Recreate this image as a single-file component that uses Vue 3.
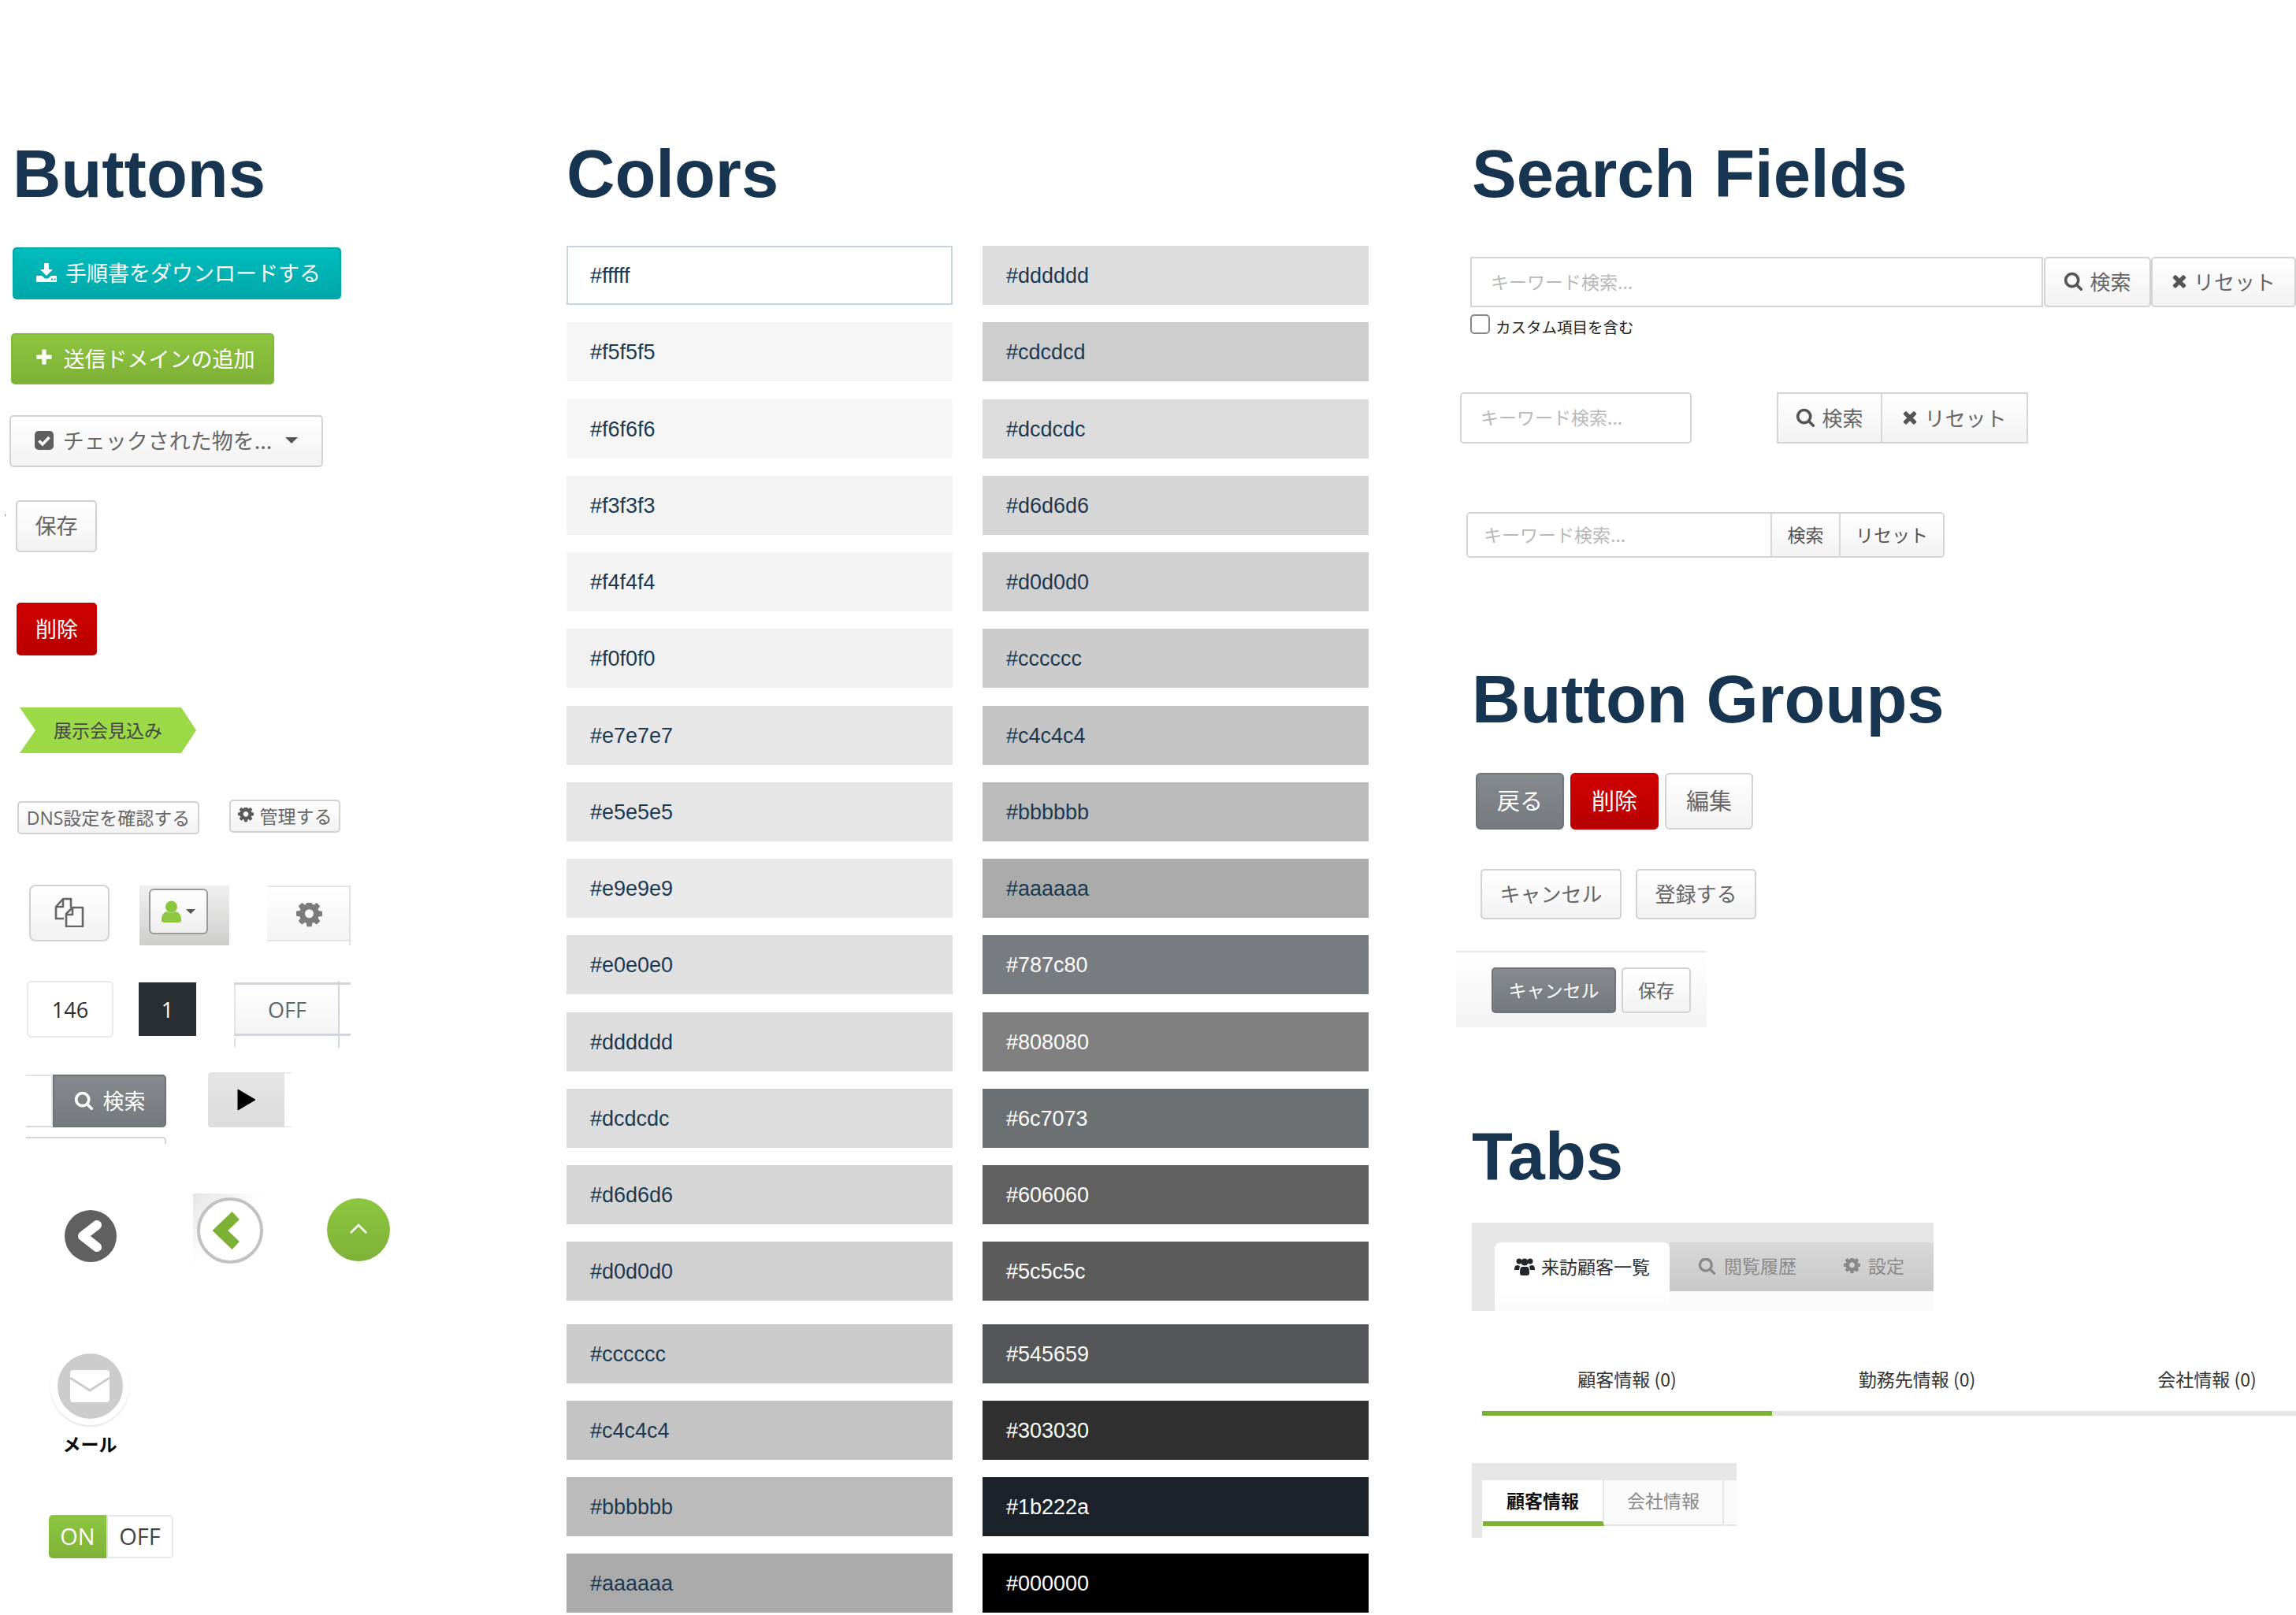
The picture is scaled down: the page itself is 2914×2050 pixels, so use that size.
<script setup>
const leftColors = ['#fffff', '#f5f5f5', '#f6f6f6', '#f3f3f3', '#f4f4f4', '#f0f0f0', '#e7e7e7', '#e5e5e5', '#e9e9e9', '#e0e0e0', '#dddddd', '#dcdcdc', '#d6d6d6', '#d0d0d0', '#cccccc', '#c4c4c4', '#bbbbbb', '#aaaaaa']
const rightColors = ['#dddddd', '#cdcdcd', '#dcdcdc', '#d6d6d6', '#d0d0d0', '#cccccc', '#c4c4c4', '#bbbbbb', '#aaaaaa', '#787c80', '#808080', '#6c7073', '#606060', '#5c5c5c', '#545659', '#303030', '#1b222a', '#000000']
const lightText = ['#787c80', '#808080', '#6c7073', '#606060', '#5c5c5c', '#545659', '#303030', '#1b222a', '#000000']

const gearPath = 'M1024 640q0-106-75-181t-181-75-181 75-75 181 75 181 181 75 181-75 75-181zm512-109v222q0 12-8 23t-20 13l-185 28q-19 54-39 91 35 50 107 138 10 12 10 25t-9 23q-27 37-99 108t-94 71q-12 0-26-9l-138-108q-44 23-91 38-16 136-29 186-7 28-36 28h-222q-14 0-24.5-8.5t-11.5-21.5l-28-184q-49-16-90-37l-141 107q-10 9-25 9-14 0-25-11-126-114-165-168-7-10-7-23 0-12 8-23 15-21 51-66.5t54-70.5q-27-50-41-99l-183-27q-13-2-21-12.5t-8-23.5v-222q0-12 8-23t19-13l186-28q14-46 39-92-40-57-107-138-10-12-10-24 0-10 9-23 26-36 98.5-107.5t94.5-71.5q13 0 26 10l138 107q44-23 91-38 16-136 29-186 7-28 36-28h222q14 0 24.5 8.5t11.5 21.5l28 184q49 16 90 37l142-107q9-9 24-9 13 0 25 10 129 119 165 170 7 8 7 22 0 12-8 23-15 21-51 66.5t-54 70.5q26 50 41 98l183 28q13 2 21 12.5t8 23.5z'
const searchPath = 'M1216 832q0-185-131.5-316.5t-316.5-131.5-316.5 131.5-131.5 316.5 131.5 316.5 316.5 131.5 316.5-131.5 131.5-316.5zm512 832q0 52-38 90t-90 38q-54 0-90-38l-343-342q-179 124-399 124-143 0-273.5-55.5t-225-150-150-225-55.5-273.5 55.5-273.5 150-225 225-150 273.5-55.5 273.5 55.5 225 150 150 225 55.5 273.5q0 220-124 399l343 343q37 37 37 90z'
const timesPath = 'M1298 1322q0 40-28 68l-136 136q-28 28-68 28t-68-28l-294-294-294 294q-28 28-68 28t-68-28l-136-136q-28-28-28-68t28-68l294-294-294-294q-28-28-28-68t28-68l136-136q28-28 68-28t68 28l294 294 294-294q28-28 68-28t68 28l136 136q28 28 28 68t-28 68l-294 294 294 294q28 28 28 68z'
const plusPath = 'M1600 736v192q0 40-28 68t-68 28h-416v416q0 40-28 68t-68 28h-192q-40 0-68-28t-28-68v-416h-416q-40 0-68-28t-28-68v-192q0-40 28-68t68-28h416v-416q0-40 28-68t68-28h192q40 0 68 28t28 68v416h416q40 0 68 28t28 68z'
</script>

<template>
  <div class="page">
    <!-- buttons -->
    <section class="col col-buttons">
      <h1 class="heading">Buttons</h1>

      <button class="btn btn-teal dl-btn">
        <svg class="ic-dl" viewBox="0 0 26 24"><path fill="#fff" d="M10 0h6v8h5l-8 8-8-8h5z" /><path fill="#fff" fill-rule="evenodd" d="M0 16h7l4 3.5h4l4-3.5h7v7a1 1 0 0 1-1 1H1a1 1 0 0 1-1-1zM19 19.5h2v2h-2zM22.500 19.500h2v2h-2z" /></svg>
        手順書をダウンロードする
      </button>

      <button class="btn btn-green add-btn">
        <svg class="ic-plus" viewBox="100 100 1592 1592"><path fill="#fff" :d="plusPath" /></svg>
        送信ドメインの追加
      </button>

      <button class="btn btn-plain check-btn">
        <svg class="ic-check" viewBox="0 0 24 24"><rect width="24" height="24" rx="5" fill="#5f5f5f" /><path d="M5.500 12.500l4.500 4.500 8.500-9" fill="none" stroke="#fff" stroke-width="3.600" /></svg>
        <span class="check-label">チェックされた物を...</span>
        <span class="caret"></span>
      </button>

      <div class="save-row">
        <span class="speck"></span>
        <button class="btn btn-plain small-btn">保存</button>
      </div>

      <button class="btn btn-red del-btn">削除</button>

      <div class="arrow-tag">展示会見込み</div>

      <div class="mini-row">
        <button class="btn btn-plain mini dns">DNS設定を確認する</button>
        <button class="btn btn-plain mini manage">
          <svg class="ic-gear-sm" viewBox="0 0 1536 1536"><path fill="#5a5a5a" :d="gearPath" /></svg>
          管理する
        </button>
      </div>

      <div class="icon-row">
        <button class="btn btn-plain copy-btn">
          <svg class="ic-copy" viewBox="0 0 38 38" fill="none" stroke="#666" stroke-width="2.600" stroke-linejoin="round">
            <path d="M12 27H2V12L11 2h10v11" />
            <path d="M11 2v10H2" />
            <path d="M15 37V21l8-8h13v24z" fill="#fafafa" />
            <path d="M23 13v9h-8" />
          </svg>
        </button>
        <div class="user-tile">
          <div class="user-inner">
            <svg class="ic-user" viewBox="0 0 25 28"><circle cx="12.500" cy="8" r="7.500" fill="#8cc63f" /><path fill="#8cc63f" d="M0 25c0-7 3-10 7-11 3 2 8 2 11 0 4 1 7 4 7 11q0 3-3 3H3q-3 0-3-3z" /></svg>
            <span class="caret caret-sm"></span>
          </div>
        </div>
        <div class="gear-tile">
          <div class="gear-inner">
            <svg class="ic-gear" viewBox="0 0 1536 1536"><path fill="#7b7b7b" :d="gearPath" /></svg>
          </div>
        </div>
      </div>

      <div class="num-row">
        <div class="num">146</div>
        <div class="num-dark">1</div>
        <div class="off-clip">
          <div class="off-main">OFF</div>
          <div class="off-stub"></div>
        </div>
      </div>

      <div class="tool-row">
        <div class="search-clip">
          <div class="search-top">
            <div class="search-blank"></div>
            <button class="btn btn-grey search-grey">
              <svg class="ic-search" viewBox="0 0 1792 1792"><path fill="#fff" :d="searchPath" /></svg>
              検索
            </button>
          </div>
          <div class="search-next"></div>
        </div>
        <div class="play-clip">
          <div class="play-box">
            <svg class="ic-play" viewBox="0 0 24 28"><path d="M1 1l22 13L1 27z" fill="#000" stroke="#000" stroke-linejoin="round" /></svg>
          </div>
          <div class="play-rest"></div>
        </div>
      </div>

      <div class="round-row">
        <div class="round-dark">
          <svg viewBox="0 0 66 66" class="fill"><path d="M41 19L23 33l18 14" fill="none" stroke="#fff" stroke-width="12" stroke-linecap="round" stroke-linejoin="round" /></svg>
        </div>
        <div class="round-tile">
          <div class="round-ring">
            <svg viewBox="0 0 84 84" class="fill"><path d="M50 21L28 42l22 21" fill="none" stroke="#7cb135" stroke-width="15" /></svg>
          </div>
        </div>
        <div class="round-green">
          <svg viewBox="0 0 80 80" class="fill"><path d="M30 44l10-10 10 10" fill="none" stroke="#fff" stroke-width="2.500" /></svg>
        </div>
      </div>

      <div class="mail">
        <div class="mail-ring">
          <div class="mail-disc">
            <svg class="ic-mail" viewBox="0 0 50 41"><rect width="50" height="41" rx="4" fill="#fff" /><path d="M0 10l25 16 25-16" fill="none" stroke="#ccc" stroke-width="3" /></svg>
          </div>
        </div>
        <div class="mail-label">メール</div>
      </div>

      <div class="switch">
        <span class="switch-on">ON</span>
        <span class="switch-off">OFF</span>
      </div>
    </section>

    <!-- colors -->
    <section class="col col-colors">
      <h1 class="heading">Colors</h1>
      <div class="swatches">
        <div class="swatch-col">
          <div
            v-for="(c, i) in leftColors"
            :key="'l' + i"
            class="swatch"
            :class="{ 'swatch-first': i === 0, 'swatch-gap': i === 14 }"
            :style="{ background: i === 0 ? '#fff' : c }"
          >{{ c }}</div>
        </div>
        <div class="swatch-col">
          <div
            v-for="(c, i) in rightColors"
            :key="'r' + i"
            class="swatch"
            :class="{ 'swatch-light': lightText.includes(c), 'swatch-gap': i === 14 }"
            :style="{ background: c }"
          >{{ c }}</div>
        </div>
      </div>
    </section>

    <!-- search, groups, tabs -->
    <section class="col col-right">
      <h1 class="heading">Search Fields</h1>

      <div class="search-one">
        <input class="field field-one" placeholder="キーワード検索..." />
        <button class="btn btn-plain s1-search">
          <svg class="ic-s" viewBox="0 0 1792 1792"><path fill="#555" :d="searchPath" /></svg>
          検索
        </button>
        <button class="btn btn-plain s1-reset">
          <svg class="ic-x" viewBox="0 0 1408 1792"><path fill="#555" :d="timesPath" /></svg>
          リセット
        </button>
      </div>
      <label class="custom">
        <span class="fake-check"></span>
        カスタム項目を含む
      </label>

      <div class="search-two">
        <input class="field field-two" placeholder="キーワード検索..." />
        <div class="s2-group">
          <button class="s2-btn s2-search">
            <svg class="ic-s" viewBox="0 0 1792 1792"><path fill="#555" :d="searchPath" /></svg>
            検索
          </button>
          <button class="s2-btn s2-reset">
            <svg class="ic-x" viewBox="0 0 1408 1792"><path fill="#555" :d="timesPath" /></svg>
            リセット
          </button>
        </div>
      </div>

      <div class="search-three">
        <input class="field field-three" placeholder="キーワード検索..." />
        <button class="s3-btn s3-search">検索</button>
        <button class="s3-btn s3-reset">リセット</button>
      </div>

      <h1 class="heading heading-groups">Button Groups</h1>

      <div class="group-one">
        <button class="btn btn-grey g1">戻る</button>
        <button class="btn btn-red g1">削除</button>
        <button class="btn btn-plain g1">編集</button>
      </div>

      <div class="group-two">
        <button class="btn btn-plain g2-cancel">キャンセル</button>
        <button class="btn btn-plain g2-save">登録する</button>
      </div>

      <div class="group-panel">
        <button class="btn btn-grey g3-cancel">キャンセル</button>
        <button class="btn btn-plain g3-save">保存</button>
      </div>

      <h1 class="heading heading-tabs">Tabs</h1>

      <div class="tabs-one">
        <div class="t1-active">
          <svg class="ic-users" viewBox="0 0 26 24"><g fill="#23272b"><circle cx="6" cy="6" r="3.500" /><circle cx="20" cy="6" r="3.500" /><circle cx="13" cy="7" r="4.500" /><path d="M0 17c0-4 1-6 4-6l3 1-1 5H1zM26 17c0-4-1-6-4-6l-3 1 1 5h5z" /><path d="M7 21c0-6 1-8 3-8h6c2 0 3 2 3 8q0 3-3 3h-6q-3 0-3-3z" /></g></svg>
          来訪顧客一覧
        </div>
        <div class="t1-rest">
          <span class="t1-tab t1-history">
            <svg class="ic-t" viewBox="0 0 1792 1792"><path fill="#888" :d="searchPath" /></svg>
            閲覧履歴
          </span>
          <span class="t1-tab t1-settings">
            <svg class="ic-t2" viewBox="0 0 1536 1536"><path fill="#888" :d="gearPath" /></svg>
            設定
          </span>
        </div>
      </div>

      <div class="tabs-two">
        <div class="t2-tab t2-active">顧客情報 (0)</div>
        <div class="t2-tab">勤務先情報 (0)</div>
        <div class="t2-tab">会社情報 (0)</div>
      </div>

      <div class="tabs-three">
        <div class="t3-bar">
          <div class="t3-tab t3-active">顧客情報</div>
          <div class="t3-tab t3-idle">会社情報</div>
        </div>
      </div>
    </section>
  </div>
</template>

<style scoped>
.page {
  display: flex;
  width: 2914px;
  height: 2050px;
  overflow: hidden;
  background: #fff;
  font-family: "Liberation Sans", "Noto Sans CJK JP", sans-serif;
}

.col {
  padding-top: 171px;
  box-sizing: border-box;
}

.col-buttons {
  width: 704px;
}

.col-colors {
  width: 1144px;
}

.col-right {
  width: 1066px;
}

.heading {
  margin: 0;
  height: 100px;
  font-size: 85px;
  line-height: 100px;
  font-weight: 700;
  color: #173450;
  white-space: nowrap;
}

.col-buttons .heading {
  margin-left: 16px;
}

.col-colors .heading {
  margin-left: 15px;
}

.col-right .heading {
  margin-left: 20px;
}

svg {
  display: block;
  flex: none;
}

.btn {
  display: flex;
  align-items: center;
  justify-content: center;
  box-sizing: border-box;
  padding: 0 0 3px;
  border: 2px solid #d2d2d2;
  border-radius: 5px;
  font-family: "Noto Sans CJK JP", sans-serif;
  font-size: 27px;
  white-space: nowrap;
}

.btn-plain {
  color: #666;
  background: linear-gradient(#fff, #f2f2f2);
}

.btn-grey {
  color: #fff;
  border-color: #70747a;
  background: linear-gradient(#868a8e, #76797d);
}

.btn-red {
  color: #fff;
  border-color: #c20000;
  background: linear-gradient(#d00000, #b80000);
}

.btn-teal {
  color: #fff;
  border-color: #00a8a8;
  background: linear-gradient(#00bcbc, #00a8ab);
}

.btn-green {
  color: #fff;
  border-color: #82b83a;
  background: linear-gradient(#8cc43e, #7eb136);
}

.caret {
  display: block;
  width: 0;
  height: 0;
  border-left: 8px solid transparent;
  border-right: 8px solid transparent;
  border-top: 8px solid #555;
}

/* left column */
.dl-btn {
  width: 417px;
  height: 66px;
  margin: 43px 0 0 16px;
  padding-left: 4px;
  gap: 11px;
}

.ic-dl {
  width: 26px;
  height: 24px;
}

.add-btn {
  width: 334px;
  height: 65px;
  margin: 43px 0 0 14px;
  padding-left: 6px;
  gap: 14px;
}

.ic-plus {
  width: 22px;
  height: 22px;
}

.check-btn {
  width: 398px;
  height: 66px;
  margin: 39px 0 0 12px;
  gap: 12px;
}

.ic-check {
  width: 24px;
  height: 24px;
}

.check-label {
  margin-right: 5px;
}

.save-row {
  position: relative;
  margin-top: 42px;
}

.speck {
  position: absolute;
  left: 6px;
  top: 18px;
  width: 1px;
  height: 2px;
  background: #777;
}

.small-btn {
  width: 103px;
  height: 66px;
  margin-left: 20px;
}

.del-btn {
  width: 102px;
  height: 67px;
  margin: 64px 0 0 21px;
}

.arrow-tag {
  display: flex;
  align-items: center;
  width: 224px;
  height: 58px;
  margin: 66px 0 0 25px;
  padding: 0 0 3px 43px;
  box-sizing: border-box;
  background: #9bd947;
  clip-path: polygon(0 0, 205px 0, 100% 50%, 205px 100%, 0 100%, 20px 50%);
  color: #444;
  font-family: "Noto Sans CJK JP", sans-serif;
  font-size: 23px;
}

.mini-row {
  display: flex;
  align-items: flex-start;
  margin: 59px 0 0 22px;
  height: 44px;
}

.mini {
  height: 42px;
  font-size: 23px;
}

.dns {
  width: 231px;
  margin-top: 2px;
  font-family: "Open Sans", "Noto Sans CJK JP", sans-serif;
}

.manage {
  width: 141px;
  margin-left: 38px;
  gap: 8px;
}

.ic-gear-sm {
  width: 20px;
  height: 20px;
}

.icon-row {
  display: flex;
  align-items: flex-start;
  height: 77px;
  margin: 64px 0 0 37px;
}

.copy-btn {
  width: 102px;
  height: 72px;
  border-radius: 8px;
}

.ic-copy {
  width: 38px;
  height: 38px;
}

.user-tile {
  width: 114px;
  height: 76px;
  margin: 1px 0 0 38px;
  padding: 4px 0 0 12px;
  box-sizing: border-box;
  background: linear-gradient(#f0f0f0, #cdcecc);
}

.user-inner {
  display: flex;
  align-items: center;
  justify-content: center;
  gap: 6px;
  width: 75px;
  height: 58px;
  box-sizing: border-box;
  border: 2px solid #999;
  border-radius: 6px;
  background: linear-gradient(#fff, #eee);
}

.ic-user {
  width: 25px;
  height: 28px;
}

.caret-sm {
  border-left-width: 6px;
  border-right-width: 6px;
  border-top-width: 6px;
}

.gear-tile {
  width: 106px;
  height: 76px;
  margin: 1px 0 0 48px;
  box-sizing: border-box;
  border-right: 2px solid #e2e2e2;
}

.gear-inner {
  display: flex;
  align-items: center;
  justify-content: center;
  height: 71px;
  padding: 5px 0 0 2px;
  box-sizing: border-box;
  border-top: 2px solid #e6e6e6;
  border-bottom: 2px solid #e2e4e8;
  background: linear-gradient(#fff, #f3f3f3);
}

.ic-gear {
  width: 33px;
  height: 33px;
}

.num-row {
  display: flex;
  align-items: flex-start;
  height: 85px;
  margin: 45px 0 0 34px;
  font-family: "Open Sans", sans-serif;
  font-size: 27px;
}

.num {
  display: flex;
  align-items: center;
  justify-content: center;
  width: 110px;
  height: 72px;
  box-sizing: border-box;
  border: 2px solid #e6ebf0;
  border-radius: 6px;
  color: #2a2e33;
}

.num-dark {
  display: flex;
  align-items: center;
  justify-content: center;
  width: 73px;
  height: 68px;
  margin: 2px 0 0 32px;
  background: #292e33;
  color: #fff;
}

.off-clip {
  position: relative;
  width: 148px;
  height: 85px;
  margin-left: 48px;
  box-sizing: border-box;
  overflow: hidden;
}

.off-clip::before {
  content: "";
  position: absolute;
  left: 0;
  right: 0;
  top: 2px;
  height: 68px;
  box-sizing: border-box;
  border-top: 3px solid #d2d6dc;
  border-bottom: 3px solid #d2d6dc;
}

.off-clip::after {
  content: "";
  position: absolute;
  left: 132px;
  top: 0;
  bottom: 0;
  width: 2px;
  background: #d2d6dc;
}

.off-main {
  display: flex;
  align-items: center;
  justify-content: center;
  width: 133px;
  height: 65px;
  padding-bottom: 3px;
  margin-top: 5px;
  box-sizing: border-box;
  border-left: 2px solid #e2e4e8;
  border-radius: 0 0 0 5px;
  background: linear-gradient(#fff, #f3f3f3);
  color: #666;
}

.off-stub {
  width: 133px;
  height: 15px;
  box-sizing: border-box;
  border-left: 2px solid #e2e4e8;
  border-radius: 5px 0 0 0;
}

.tool-row {
  display: flex;
  align-items: flex-start;
  height: 91px;
  margin: 31px 0 0 33px;
}

.search-clip {
  width: 178px;
  margin-top: 3px;
}

.search-top {
  display: flex;
  height: 67px;
}

.search-blank {
  width: 34px;
  box-sizing: border-box;
  border-top: 2px solid #e2e4e8;
  border-bottom: 2px solid #d8dce0;
  border-right: 2px solid #e2e4e8;
}

.search-grey {
  width: 144px;
  height: 67px;
  gap: 12px;
  border-radius: 0 5px 5px 0;
}

.ic-search {
  width: 25px;
  height: 25px;
}

.search-next {
  height: 9px;
  margin-top: 12px;
  box-sizing: border-box;
  border-top: 2px solid #d2d6dc;
  border-right: 2px solid #d2d6dc;
  border-radius: 0 5px 0 0;
}

.play-clip {
  display: flex;
  width: 106px;
  height: 70px;
  margin-left: 53px;
}

.play-box {
  display: flex;
  align-items: center;
  justify-content: center;
  width: 97px;
  box-sizing: border-box;
  border-radius: 4px 0 0 4px;
  background: linear-gradient(#e5e5e5, #dcdcdc);
}

.ic-play {
  width: 24px;
  height: 28px;
}

.play-rest {
  flex: 1;
  box-sizing: border-box;
  border-top: 2px solid #eee;
  border-bottom: 2px solid #eee;
}

.round-row {
  display: flex;
  align-items: flex-start;
  height: 95px;
  margin: 63px 0 0 82px;
}

.fill {
  width: 100%;
  height: 100%;
}

.round-dark {
  width: 66px;
  height: 66px;
  margin-top: 21px;
  border-radius: 50%;
  background: #606060;
}

.round-tile {
  width: 90px;
  height: 95px;
  margin-left: 97px;
  padding: 5px 0 0 5px;
  box-sizing: border-box;
  background: linear-gradient(135deg, #e4e4e4, #fff 50%);
}

.round-ring {
  width: 84px;
  height: 84px;
  box-sizing: border-box;
  border: 4px solid #c2c2c2;
  border-radius: 50%;
  background: #fff;
}

.round-green {
  width: 80px;
  height: 80px;
  margin: 6px 0 0 80px;
  border-radius: 50%;
  background: linear-gradient(#8cc63f, #7fb238);
}

.mail {
  width: 100px;
  margin: 99px 0 0 64px;
}

.mail-ring {
  display: flex;
  align-items: center;
  justify-content: center;
  width: 100px;
  height: 100px;
  border-radius: 50%;
  background: #fff;
  box-shadow: 0 2px 2px #e6e6e6;
}

.mail-disc {
  display: flex;
  align-items: center;
  justify-content: center;
  width: 83px;
  height: 83px;
  border-radius: 50%;
  background: #ccc;
}

.ic-mail {
  width: 50px;
  height: 41px;
}

.mail-label {
  margin-top: 5px;
  text-align: center;
  white-space: nowrap;
  color: #000;
  font-family: "Noto Sans CJK JP", sans-serif;
  font-size: 23px;
  font-weight: 700;
  line-height: 36px;
}

.switch {
  display: flex;
  width: 158px;
  height: 55px;
  margin: 73px 0 0 62px;
  font-family: "Open Sans", sans-serif;
  font-size: 29px;
}

.switch-on {
  display: flex;
  align-items: center;
  justify-content: center;
  width: 73px;
  padding-bottom: 2px;
  box-sizing: border-box;
  border-radius: 5px 0 0 5px;
  background: linear-gradient(#8cc63f, #7fb238);
  color: #fff;
}

.switch-off {
  display: flex;
  align-items: center;
  justify-content: center;
  flex: 1;
  padding-bottom: 2px;
  box-sizing: border-box;
  border: 2px solid #e4e9ee;
  border-left-color: #d8e0e4;
  border-radius: 0 5px 5px 0;
  color: #444;
}

/* colors */
.swatches {
  display: flex;
  gap: 38px;
  margin: 41px 0 0 15px;
}

.swatch-col {
  display: flex;
  flex-direction: column;
  gap: 22.25px;
  width: 490px;
}

.swatch {
  display: flex;
  align-items: center;
  flex: none;
  height: 75px;
  padding: 2px 0 0 30px;
  box-sizing: border-box;
  color: #1b3a52;
  font-size: 27px;
}

.swatch-first {
  border: 2px solid #c6d4de;
  padding-left: 28px;
}

.swatch-light {
  color: #fff;
}

.swatch-gap {
  margin-top: 7px;
}

/* search fields */
.field {
  display: block;
  box-sizing: border-box;
  margin: 0;
  padding: 0 0 3px 24px;
  outline: none;
  border: 2px solid #d2d6da;
  background: #fff;
  font-family: "Noto Sans CJK JP", sans-serif;
  font-size: 23px;
}

.field::placeholder {
  color: #b9b9b9;
}

.search-one {
  display: flex;
  margin: 55px 0 0 18px;
  height: 64px;
}

.field-one {
  width: 727px;
  height: 64px;
}

.s1-search {
  width: 136px;
  margin-left: 1px;
  gap: 8px;
  font-size: 26px;
}

.s1-reset {
  width: 184px;
  gap: 8px;
  font-size: 26px;
}

.ic-s {
  width: 25px;
  height: 25px;
}

.ic-x {
  width: 20px;
  height: 25px;
}

.custom {
  display: flex;
  align-items: flex-start;
  gap: 7px;
  height: 25px;
  margin: 9px 0 0 18px;
  color: #222;
  font-family: "Noto Sans CJK JP", sans-serif;
  font-size: 19.500px;
  line-height: 32px;
  white-space: nowrap;
}

.fake-check {
  width: 25px;
  height: 25px;
  box-sizing: border-box;
  border: 2px solid #888;
  border-radius: 5px;
  background: #fff;
}

.search-two {
  display: flex;
  height: 65px;
  margin: 74px 0 0 5px;
}

.field-two {
  width: 294px;
  height: 65px;
  border-radius: 5px;
}

.s2-group {
  display: flex;
  margin-left: 108px;
  box-sizing: border-box;
  border: 2px solid #d2d6da;
}

.s2-btn {
  display: flex;
  align-items: center;
  justify-content: center;
  gap: 8px;
  box-sizing: border-box;
  padding: 0 0 3px;
  border: 0;
  background: linear-gradient(#fff, #f2f2f2);
  color: #666;
  font-family: "Noto Sans CJK JP", sans-serif;
  font-size: 26px;
  white-space: nowrap;
}

.s2-search {
  width: 132px;
  border-right: 2px solid #d8d8d8;
}

.s2-reset {
  width: 183px;
}

.search-three {
  display: flex;
  width: 607px;
  height: 58px;
  margin: 87px 0 0 13px;
  box-sizing: border-box;
  border: 2px solid #d2d6da;
  border-radius: 5px;
  overflow: hidden;
}

.field-three {
  width: 384px;
  height: 54px;
  padding-left: 20px;
  border: 0;
}

.s3-btn {
  box-sizing: border-box;
  padding: 0 0 3px;
  border: 0;
  border-left: 2px solid #d8d8d8;
  background: linear-gradient(#fff, #f2f2f2);
  color: #555;
  font-family: "Noto Sans CJK JP", sans-serif;
  font-size: 23px;
  white-space: nowrap;
}

.s3-search {
  width: 87px;
}

.s3-reset {
  flex: 1;
}

/* button groups */
.heading-groups {
  margin-top: 130px;
}

.group-one {
  display: flex;
  gap: 8px;
  height: 72px;
  margin: 43px 0 0 25px;
}

.g1 {
  width: 112px;
  height: 72px;
  padding-bottom: 5px;
  border-radius: 6px;
  font-size: 29px;
}

.group-two {
  display: flex;
  gap: 18px;
  height: 64px;
  margin: 50px 0 0 31px;
}

.g2-cancel {
  width: 179px;
  font-size: 26px;
}

.g2-save {
  width: 153px;
  font-size: 26px;
}

.group-panel {
  display: flex;
  gap: 7px;
  width: 318px;
  height: 97px;
  margin-top: 40px;
  padding: 19px 0 0 45px;
  box-sizing: border-box;
  border-top: 2px solid #e8e8e8;
  background: linear-gradient(#fff, #f3f3f3);
}

.g3-cancel {
  width: 158px;
  height: 58px;
  font-size: 23px;
}

.g3-save {
  width: 88px;
  height: 58px;
  font-size: 23px;
}

/* tabs */
.heading-tabs {
  margin-top: 114px;
}

.tabs-one {
  display: flex;
  width: 586px;
  height: 112px;
  margin: 34px 0 0 20px;
  padding: 25px 0 0 29px;
  box-sizing: border-box;
  background: #e6e6e6;
  font-family: "Noto Sans CJK JP", sans-serif;
  font-size: 23px;
}

.t1-active {
  display: flex;
  align-items: flex-start;
  gap: 8px;
  width: 222px;
  height: 87px;
  padding: 15px 0 0 25px;
  box-sizing: border-box;
  border-radius: 8px 8px 0 0;
  background: linear-gradient(#fff 70%, #fafafa);
  color: #2a2e33;
  line-height: 30px;
}

.ic-users {
  width: 26px;
  height: 24px;
  margin-top: 3px;
}

.t1-rest {
  display: flex;
  align-items: flex-start;
  flex: 1;
  height: 87px;
  background: linear-gradient(#fff 62px, #fafafa 62px);
  position: relative;
}

.t1-rest::before {
  content: "";
  position: absolute;
  left: 0;
  right: 0;
  top: 0;
  height: 62px;
  background: linear-gradient(#d8d8d8, #c8c8c8);
}

.t1-tab {
  position: relative;
  display: flex;
  align-items: center;
  gap: 10px;
  height: 62px;
  padding-bottom: 4px;
  box-sizing: border-box;
  color: #8a8a8a;
}

.t1-history {
  margin-left: 36px;
}

.t1-settings {
  margin-left: 60px;
}

.ic-t {
  width: 23px;
  height: 23px;
}

.ic-t2 {
  width: 21px;
  height: 21px;
  margin-top: 2px;
}

.tabs-two {
  display: flex;
  height: 77px;
  margin: 56px 0 0 33px;
  border-bottom: 6px solid #e6e6e6;
  box-sizing: border-box;
  font-family: "Noto Sans CJK JP", sans-serif;
  font-size: 23px;
  color: #333;
}

.t2-tab {
  flex: none;
  width: 368px;
  height: 77px;
  box-sizing: border-box;
  padding-top: 13px;
  text-align: center;
  line-height: 34px;
}

.t2-active {
  border-bottom: 6px solid #7cb135;
}

.tabs-three {
  width: 336px;
  height: 95px;
  margin: 60px 0 0 20px;
  padding-top: 22px;
  box-sizing: border-box;
  background: linear-gradient(90deg, #e6e6e6 13px, #fff 13px);
  position: relative;
}

.tabs-three::before {
  content: "";
  position: absolute;
  left: 0;
  right: 0;
  top: 0;
  height: 22px;
  background: #e6e6e6;
}

.t3-bar {
  display: flex;
  margin-left: 14px;
  height: 58px;
  box-sizing: border-box;
  border-bottom: 2px solid #e4e4e4;
  background: #fafafa;
  font-family: "Noto Sans CJK JP", sans-serif;
  font-size: 23px;
}

.t3-tab {
  width: 152px;
  height: 58px;
  box-sizing: border-box;
  border-right: 2px solid #e6e6e6;
  padding-top: 8px;
  text-align: center;
  line-height: 34px;
}

.t3-active {
  width: 154px;
  border-bottom: 6px solid #7cb135;
  border-radius: 6px 0 0 0;
  background: #fff;
  color: #111;
  font-weight: 700;
}

.t3-idle {
  color: #888;
}
</style>

<style>
html,
body {
  margin: 0;
  background: #fff;
}
</style>
